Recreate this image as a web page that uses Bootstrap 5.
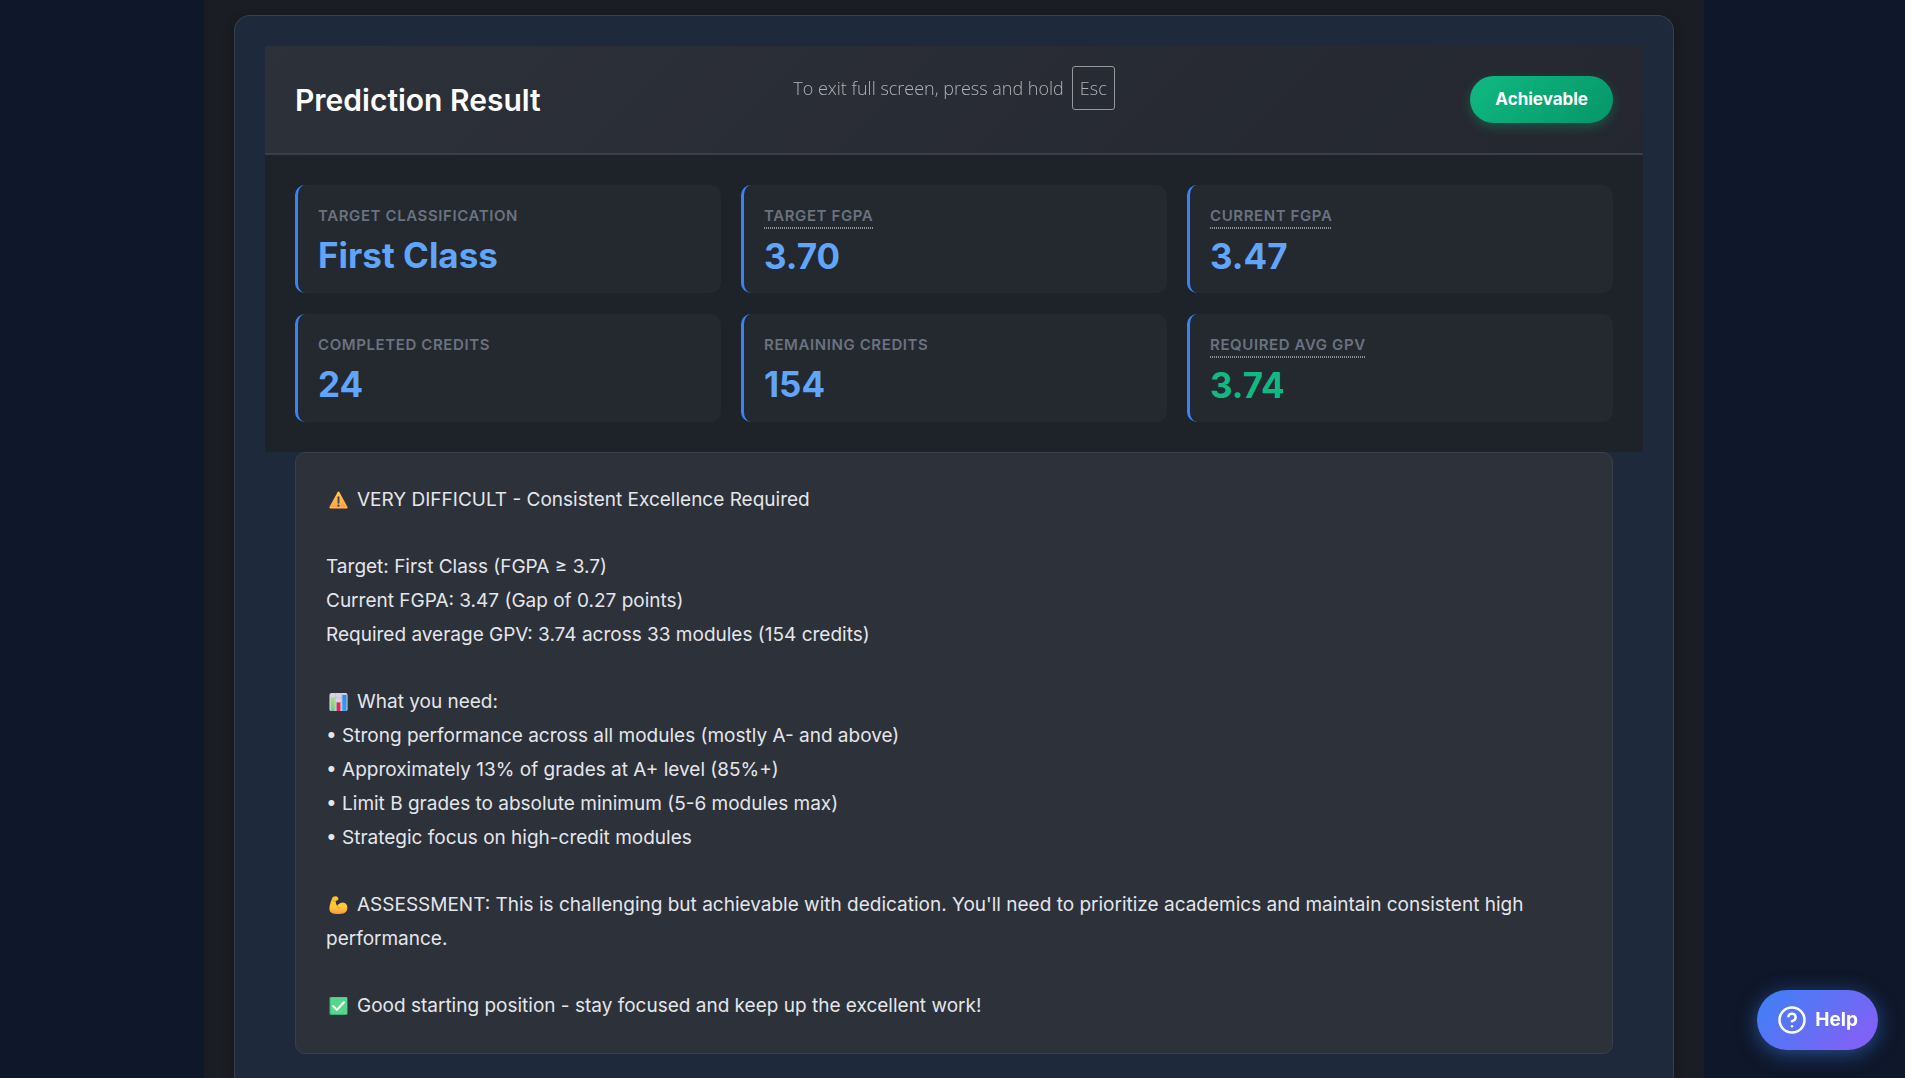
<!DOCTYPE html>
<html lang="en">
<head>
<meta charset="utf-8">
<meta name="viewport" content="width=device-width, initial-scale=1">
<title>Prediction Result</title>
<link href="https://cdn.jsdelivr.net/npm/bootstrap@5.3.0/dist/css/bootstrap.min.css" rel="stylesheet">
<style>
  body { background: #0f172a; font-family: Inter, "Liberation Sans", sans-serif; color: #e4e6eb; padding-left: 3px; }
  .page-shell { max-width: 1500px; background: #1a1d23; padding: 15px 30px 0; }
  .result-card { background: #1e293b; border: 1px solid #3a3f4b; border-bottom: 0; border-radius: 16px 16px 0 0; padding: 30px 30px 0; box-shadow: 0 4px 12px rgba(0, 0, 0, .3); }
  .result-head { padding: 30px; background: linear-gradient(135deg, #2d3139, #24272f); border-bottom: 2px solid #3a3f4b; }
  .result-title { font-size: 30px; font-weight: 600; line-height: 36px; color: #fff; }
  .status-pill { font-size: 17px; font-weight: 700; line-height: 27px; padding: 10px 25px; color: #fff; background: linear-gradient(135deg, #10b981, #059669); box-shadow: 0 4px 12px rgba(16, 185, 129, .3); }
  .stat-grid { display: grid; grid-template-columns: repeat(3, 1fr); gap: 21px 20px; padding: 30px; background: #1e2229; }
  .stat-tile { background: #24282f; border-left: 3px solid #3b82f6; border-radius: 10px; padding: 20px 20px 19px; }
  .stat-label { font-size: 15px; font-weight: 600; line-height: 22px; letter-spacing: .04em; color: #6b7280; text-transform: uppercase; margin-bottom: 10px; }
  .stat-label.hinted { margin-bottom: 11px; }
  .stat-label abbr { text-decoration: none; cursor: help; padding-bottom: 4px; background: repeating-linear-gradient(90deg, #8b9099 0 1px, transparent 1px 2px) left bottom / 100% 2px no-repeat; }
  .stat-value { font-size: 35px; font-weight: 700; line-height: 36px; color: #60a5fa; }
  .stat-value.reachable { color: #10b981; }
  .advice { margin: 0 30px; padding: 30px; background: #2d3139; border: 1px solid #3a3f4b; border-radius: 10px; font-size: 19px; font-weight: 400; line-height: 34px; display: flex; flex-direction: column; gap: 33px; }
  .advice .pict { width: 25px; height: 20px; padding: 0 3px; margin-right: 6px; vertical-align: -4px; }
  .esc-hint { position: fixed; top: 66px; left: 3px; right: 0; font: 300 18px/24px "Open Sans", "Noto Sans", sans-serif; color: #b0b2b5; white-space: nowrap; pointer-events: none; }
  .esc-hint kbd { font: inherit; color: inherit; background: transparent; border: 1px solid #97999c; border-radius: 3px; padding: 9px 7px; }
  .help-btn { position: fixed; right: 27px; bottom: 28px; height: 60px; padding: 0 20px; border: 0; font-size: 19px; font-weight: 700; color: #fff; background: linear-gradient(135deg, #3b82f6, #8b5cf6); box-shadow: 0 4px 20px rgba(59, 130, 246, .5); }
</style>
</head>
<body>
<main class="page-shell mx-auto min-vh-100 d-flex flex-column">
  <section class="result-card flex-grow-1">
    <header class="result-head d-flex justify-content-between align-items-center">
      <h2 class="result-title mb-0">Prediction Result</h2>
      <span class="status-pill rounded-pill">Achievable</span>
    </header>
    <div class="stat-grid">
      <div class="stat-tile"><div class="stat-label">Target Classification</div><div class="stat-value">First Class</div></div>
      <div class="stat-tile"><div class="stat-label hinted"><abbr>Target FGPA</abbr></div><div class="stat-value">3.70</div></div>
      <div class="stat-tile"><div class="stat-label hinted"><abbr>Current FGPA</abbr></div><div class="stat-value">3.47</div></div>
      <div class="stat-tile"><div class="stat-label">Completed Credits</div><div class="stat-value">24</div></div>
      <div class="stat-tile"><div class="stat-label">Remaining Credits</div><div class="stat-value">154</div></div>
      <div class="stat-tile"><div class="stat-label hinted"><abbr>Required Avg GPV</abbr></div><div class="stat-value reachable">3.74</div></div>
    </div>
    <div class="advice">
      <p class="mb-0"><svg class="pict" viewBox="0 0 20 20" aria-hidden="true"><defs><linearGradient id="warn" x2="0" y2="1"><stop stop-color="#ffce4a"/><stop offset="1" stop-color="#ff9f4a"/></linearGradient></defs><path d="M9 1.800q1-1.600 2 0l8.400 15.400q.8 1.800-1 1.800H1.600q-1.800 0-1-1.800z" fill="url(#warn)"/><path d="M1.200 18h17.600" stroke="#ffb765" stroke-width="1"/><path d="M10 7v6" stroke="#4a4145" stroke-width="2" stroke-linecap="round"/><circle cx="10" cy="16" r="1.200" fill="#4a4145"/></svg>VERY DIFFICULT - Consistent Excellence Required</p>
      <p class="mb-0">Target: First Class (FGPA ≥ 3.7)<br>Current FGPA: 3.47 (Gap of 0.27 points)<br>Required average GPV: 3.74 across 33 modules (154 credits)</p>
      <p class="mb-0"><svg class="pict" viewBox="0 0 20 20" aria-hidden="true"><defs><linearGradient id="barg" x2="0" y2="1"><stop stop-color="#a6e85a"/><stop offset="1" stop-color="#5fd08a"/></linearGradient><linearGradient id="barb" x2="0" y2="1"><stop stop-color="#2f8be0"/><stop offset="1" stop-color="#3f9df0"/></linearGradient></defs><rect x=".5" y=".5" width="19" height="19" rx="2" fill="#d9d2e6"/><path d="M.5 5.500h19M.5 10.500h19M.5 15.500h19M7 .5v19M13 .5v19" stroke="#bdb3cf" stroke-width=".6"/><rect x="2" y="5" width="4" height="14.500" fill="url(#barg)"/><rect x="8" y="10.500" width="4" height="9" fill="#e0245e"/><rect x="14" y="2.500" width="4.500" height="17" fill="url(#barb)"/></svg>What you need:<br>• Strong performance across all modules (mostly A- and above)<br>• Approximately 13% of grades at A+ level (85%+)<br>• Limit B grades to absolute minimum (5-6 modules max)<br>• Strategic focus on high-credit modules</p>
      <p class="mb-0"><svg class="pict" viewBox="0 0 20 20" aria-hidden="true"><defs><linearGradient id="arm" x2="0" y2="1"><stop stop-color="#ffbe2e"/><stop offset=".6" stop-color="#ffc83d"/><stop offset="1" stop-color="#f59a3c"/></linearGradient></defs><path d="M3.200 3.200C4 1 6.500.2 8.500 1.200c1.800 1 1.700 2.900.6 3.900-.8.700-1.600.5-2.200.6.300 2 .8 3.800 1.500 5.200C10.500 7.800 14.500 6.300 17.500 8.300c2.400 1.700 2.400 6.200.6 8.600-1.300 1.900-4.200 2.600-7.600 2.600-3.800 0-7.300-.5-9-2.200C.3 16 .3 13.500.8 10.800c.5-3 1.500-5.200 2.400-7.600z" fill="url(#arm)"/><path d="M8.400 10.900c.4 1.100 1.300 1.900 2.500 2.300" stroke="#e08a1e" stroke-width="1" fill="none" stroke-linecap="round"/><path d="M4 5.200c.9.700 1.900.8 2.900.5" stroke="#e08a1e" stroke-width=".8" fill="none"/></svg>ASSESSMENT: This is challenging but achievable with dedication. You'll need to prioritize academics and maintain consistent high performance.</p>
      <p class="mb-0"><svg class="pict" viewBox="0 0 20 20" aria-hidden="true"><rect x=".5" y=".5" width="19" height="19" rx="1.500" fill="#3fae74"/><rect x="1.500" y=".8" width="17.500" height="17.500" rx="1" fill="#55d68c"/><path d="M4.500 10.200l3.800 3.900 7.400-8" stroke="#fff" stroke-width="2.200" fill="none" stroke-linecap="round" stroke-linejoin="round"/></svg>Good starting position - stay focused and keep up the excellent work!</p>
    </div>
  </section>
</main>
<div class="esc-hint d-flex justify-content-center align-items-center gap-2"><span>To exit full screen, press and hold</span><kbd>Esc</kbd></div>
<button type="button" class="help-btn rounded-pill d-flex align-items-center gap-2"><svg width="30" height="30" viewBox="0 0 24 24" fill="none" stroke="#fff" stroke-width="2" stroke-linecap="round" stroke-linejoin="round" aria-hidden="true"><circle cx="12" cy="12" r="10"/><path d="M9.090 9a3 3 0 0 1 5.830 1c0 2-3 3-3 3"/><path d="M12 17h.01"/></svg><span>Help</span></button>
<script src="https://cdn.jsdelivr.net/npm/bootstrap@5.3.0/dist/js/bootstrap.bundle.min.js"></script>
</body>
</html>
